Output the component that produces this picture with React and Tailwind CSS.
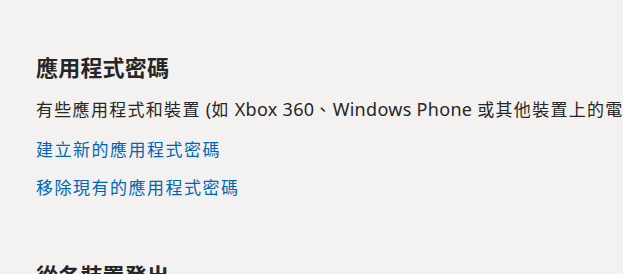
function L({ children }) {
  return <span className="text-[18px] tracking-[0.3px]">{children}</span>;
}

export default function App() {
  return (
    <div
      className="w-[623px] h-[274px] overflow-hidden bg-[#f3f2f1] text-[#262626]"
      style={{ fontFamily: '"Noto Sans", "Noto Sans CJK TC", sans-serif' }}
    >
      <div className="pl-[36px] pt-[53px] flex flex-col">
        <h2 className="text-[22px] leading-[28px] font-semibold tracking-[0.2px] whitespace-nowrap">應用程式密碼</h2>
        <p className="mt-[16px] text-[17px] leading-[24px] tracking-[1.3px] whitespace-nowrap">
          有些應用程式和裝置<L> (</L>如<L> Xbox 360</L>、<L>Windows Phone </L>或其他裝置上的電子郵件應用程式<L>) </L>不支援兩步驟驗證的安全性代碼。
        </p>
        <a href="#" className="mt-[16px] text-[17px] leading-[24px] tracking-[1.5px] text-[#0067b8] whitespace-nowrap">
          建立新的應用程式密碼
        </a>
        <a href="#" className="mt-[14px] text-[17px] leading-[24px] tracking-[1.5px] text-[#0067b8] whitespace-nowrap">
          移除現有的應用程式密碼
        </a>
        <h2 className="mt-[61px] text-[22px] leading-[28px] font-semibold tracking-[0.2px] whitespace-nowrap">從各裝置登出</h2>
      </div>
    </div>
  );
}
